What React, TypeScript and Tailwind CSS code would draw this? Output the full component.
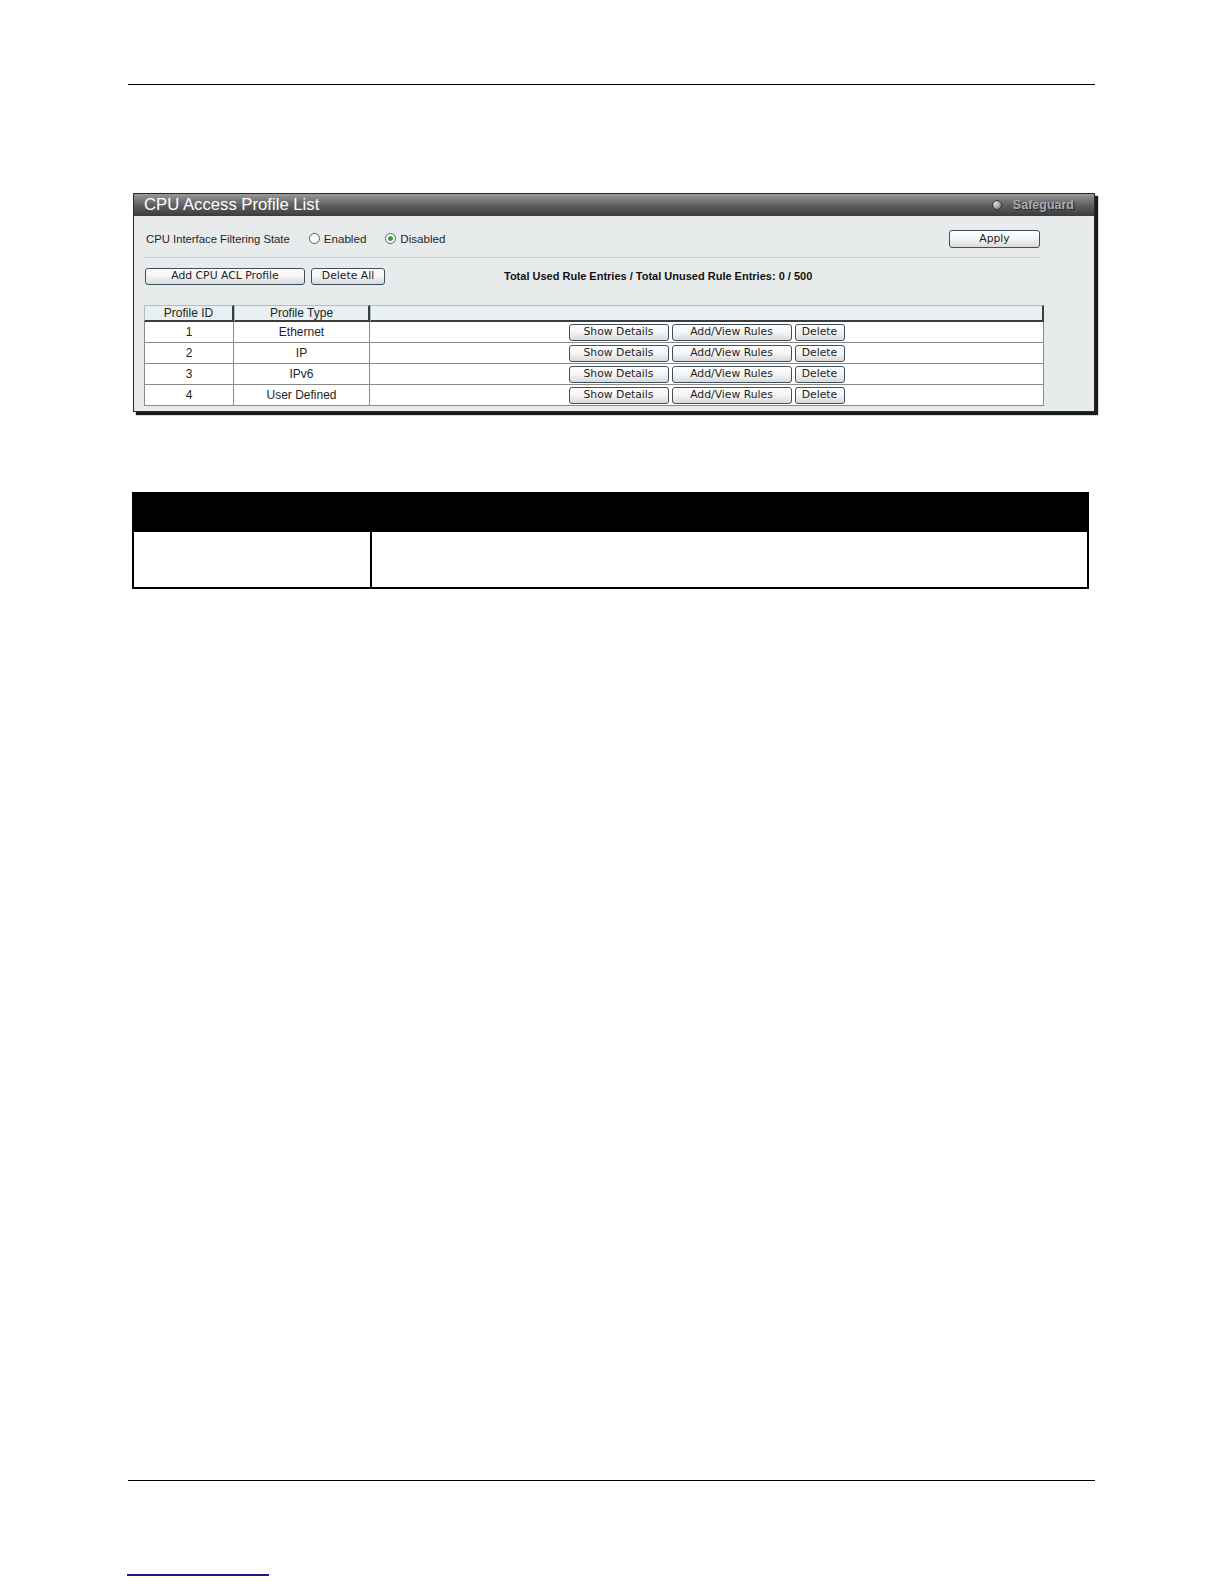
import type React from 'react';

const ROWS = [
  { id: '1', type: 'Ethernet' },
  { id: '2', type: 'IP' },
  { id: '3', type: 'IPv6' },
  { id: '4', type: 'User Defined' },
];

// Web UI push-button: white-to-gray gradient, thin slate border
function Btn({ className, children }: { className: string; children: React.ReactNode }) {
  return (
    <button
      className={`inline-flex items-center justify-center h-[17px] rounded-[3px] border border-[#3e4f5e] bg-linear-to-b from-white via-[#f4f4f4] to-[#d9d9d9] text-[10.8px] leading-none text-[#1e1e1e] font-['DejaVu_Sans',Verdana,sans-serif] ${className}`}
    >
      {children}
    </button>
  );
}

function Radio({ checked }: { checked?: boolean }) {
  return (
    <span className="inline-flex items-center justify-center w-[11px] h-[11px] rounded-full border border-[#5b5b5b] bg-white">
      {checked && <span className="w-[5px] h-[5px] rounded-full bg-[#3f9b3f]" />}
    </span>
  );
}

function Panel() {
  return (
    <div className="ml-[6px] w-[962px] border border-[#2a2a2a] shadow-[3px_3px_1px_#1c1c1c] bg-[#e8ebeb]">
      {/* Title bar */}
      <div className="h-[22px] flex items-center justify-between pl-[10px] pr-[20px] bg-linear-to-b from-[#9a9a9a] via-[#606060] to-[#3c3c3c]">
        <span className="text-white text-[16.7px] leading-none">CPU Access Profile List</span>
        <span className="flex items-center gap-[11px]">
          <span className="w-[10px] h-[10px] rounded-full border border-[#3a3a3a] bg-radial-[at_35%_35%] from-[#e0e0e0] to-[#6a6a6a]" />
          <span className="text-[12.5px] font-bold text-[#ababab] [text-shadow:1px_1px_0_#262626]">Safeguard</span>
        </span>
      </div>

      {/* Body */}
      <div className="pl-[10px] pr-[53px] pt-[14px] pb-[5px]">
        <div className="h-[18px] flex items-center text-[11.3px] text-[#1f1f1f]">
          <span className="ml-[2px]">CPU Interface Filtering State</span>
          <span className="ml-[19px] flex items-center gap-[4px] text-[11.6px]">
            <Radio />
            Enabled
          </span>
          <span className="ml-[19px] flex items-center gap-[4px] text-[11.6px]">
            <Radio checked />
            Disabled
          </span>
          <Btn className="ml-auto mr-[1px] w-[91px] h-[18px]">Apply</Btn>
        </div>

        <div className="mt-[9px] h-px bg-[#cdd1d1]" />

        <div className="mt-[10px] h-[17px] flex items-center">
          <Btn className="ml-[1px] w-[160px]">Add CPU ACL Profile</Btn>
          <Btn className="ml-[6px] w-[74px]">Delete All</Btn>
          <span className="ml-[119px] text-[11px] font-bold text-[#111]">
            Total Used Rule Entries / Total Unused Rule Entries: 0 / 500
          </span>
        </div>

        {/* Profile table */}
        <div className="mt-[20px] w-[900px] text-[12px] text-[#1f1f1f]">
          <div className="flex h-[17px]">
            <div className="w-[90px] flex items-center justify-center bg-[#e9f0f4] border-t border-l border-t-[#a9bdca] border-l-[#a9bdca] border-b-2 border-r-2 border-b-[#3c3c3c] border-r-[#3c3c3c]">
              Profile ID
            </div>
            <div className="w-[136px] flex items-center justify-center bg-[#e9f0f4] border-t border-l border-t-[#a9bdca] border-l-[#a9bdca] border-b-2 border-r-2 border-b-[#3c3c3c] border-r-[#3c3c3c]">
              Profile Type
            </div>
            <div className="flex-1 bg-[#e9f0f4] border-t border-l border-t-[#a9bdca] border-l-[#a9bdca] border-b-2 border-r-2 border-b-[#3c3c3c] border-r-[#3c3c3c]" />
          </div>
          {ROWS.map((r) => (
            <div key={r.id} className="flex h-[21px] bg-white border-b border-[#8a8a8a]">
              <div className="w-[90px] flex items-center justify-center border-l border-r border-[#8a8a8a]">{r.id}</div>
              <div className="w-[136px] flex items-center justify-center border-r border-[#8a8a8a]">{r.type}</div>
              <div className="flex-1 flex items-center justify-center gap-[3px] border-r border-[#8a8a8a]">
                <Btn className="w-[100px]">Show Details</Btn>
                <Btn className="w-[120px]">Add/View Rules</Btn>
                <Btn className="w-[50px]">Delete</Btn>
              </div>
            </div>
          ))}
        </div>
      </div>
    </div>
  );
}

export default function App() {
  return (
    <div className="w-[1224px] h-[1584px] bg-white font-['Liberation_Sans',Arial,sans-serif] pl-[127px] pt-[84px]">
      <div className="ml-[1px] w-[967px] h-px bg-black" />

      <div className="mt-[108px]">
        <Panel />
      </div>

      {/* Description table */}
      <div className="mt-[80px] ml-[5px] w-[957px] border-2 border-black">
        <div className="h-[38px] bg-black" />
        <div className="flex h-[55px]">
          <div className="w-[238px] border-r-2 border-black" />
          <div className="flex-1" />
        </div>
      </div>

      <div className="mt-[891px] ml-[1px] w-[967px] h-px bg-black" />

      <div className="mt-[93px] w-[142px] h-[2px] bg-[#1c1c8c]" />
    </div>
  );
}
